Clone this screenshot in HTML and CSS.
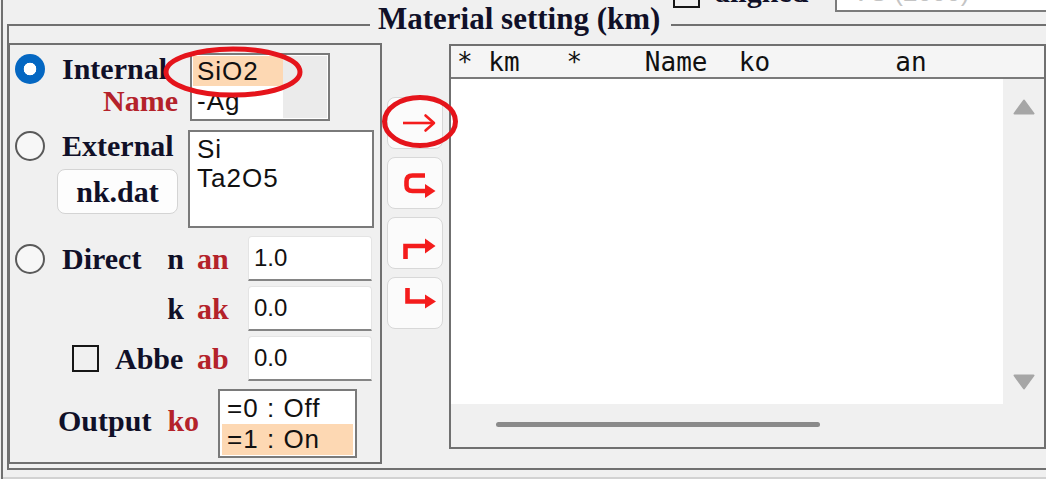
FILE: index.html
```html
<!DOCTYPE html>
<html lang="en">
<head>
<meta charset="utf-8">
<title>Material setting</title>
<link rel="stylesheet" href="styles.css">
</head>
<body>
<div class="window">
  <div class="toprow">
    <span class="chk top-chk"></span>
    <span class="aligned">aligned</span>
    <div class="topbox">VS (2000)</div>
  </div>
  <fieldset class="group">
    <legend>Material setting (km)</legend>
    <div class="grp-body">
      <div class="left">
        <div class="sec-int">
          <div class="lbls lbls-int">
            <div class="line"><span class="radio on"></span><span class="lbl">Internal</span></div>
            <div class="line end"><span class="lbl red">Name</span></div>
          </div>
          <div class="listbox lb-int">
            <div class="items">
              <div class="item sel">SiO2</div>
              <div class="item">-Ag</div>
            </div>
            <div class="gutter"></div>
          </div>
        </div>
        <div class="sec-ext">
          <div class="lbls lbls-ext">
            <div class="line"><span class="radio"></span><span class="lbl">External</span></div>
            <button class="nk">nk.dat</button>
          </div>
          <div class="listbox lb-ext">
            <div class="item">Si</div>
            <div class="item">Ta2O5</div>
          </div>
        </div>
        <div class="sec-direct">
          <div class="frow">
            <div class="fl"><span class="radio"></span><span class="lbl">Direct</span><span class="lbl push">n</span></div>
            <span class="lbl red code">an</span>
            <div class="input">1.0</div>
          </div>
          <div class="frow">
            <div class="fl end"><span class="lbl">k</span></div>
            <span class="lbl red code">ak</span>
            <div class="input">0.0</div>
          </div>
          <div class="frow">
            <div class="fl"><span class="chk abbe-chk"></span><span class="lbl">Abbe</span></div>
            <span class="lbl red code">ab</span>
            <div class="input">0.0</div>
          </div>
        </div>
        <div class="sec-out">
          <span class="lbl">Output</span>
          <span class="lbl red ko">ko</span>
          <div class="listbox lb-out">
            <div class="item">=0 : Off</div>
            <div class="item sel">=1 : On</div>
          </div>
        </div>
      </div>
      <div class="mid">
        <button class="abtn"><svg viewBox="1 1 54 50" width="54" height="50"><path d="M16 26H46" stroke="#f41c1c" stroke-width="2.6" fill="none"/><path d="M38.5 18.5L47 26L38.5 33.5" stroke="#f41c1c" stroke-width="2.6" fill="none" stroke-linecap="round" stroke-linejoin="round"/></svg></button>
        <button class="abtn"><svg viewBox="1 1 54 50" width="54" height="50"><path d="M38 18.5H25.5Q19.5 18.5 19.5 24.5V28.5Q19.5 34 25.5 34H40" stroke="#f41c1c" stroke-width="4.6" fill="none"/><path d="M38 27L48.5 34L38 41Z" fill="#f41c1c"/></svg></button>
        <button class="abtn"><svg viewBox="1 1 54 50" width="54" height="50"><path d="M18.5 42V29H40" stroke="#f41c1c" stroke-width="4.6" fill="none"/><path d="M38 21.5L48.5 29L38 36.5Z" fill="#f41c1c"/></svg></button>
        <button class="abtn"><svg viewBox="1 1 54 50" width="54" height="50"><path d="M20.5 11V24.5H40" stroke="#f41c1c" stroke-width="4.6" fill="none"/><path d="M38 17.5L49 24.5L38 31.5Z" fill="#f41c1c"/></svg></button>
      </div>
      <div class="listview">
        <div class="lv-head">* km   *    Name  ko        an</div>
        <div class="lv-main">
          <div class="lv-rows"></div>
          <div class="vscroll">
            <svg width="22" height="16" viewBox="0 0 22 16"><path d="M11 1.5L20.5 14.5H1.5Z" fill="#a6a6a6" stroke="#a6a6a6" stroke-width="2" stroke-linejoin="round"/></svg>
            <svg width="22" height="16" viewBox="0 0 22 16"><path d="M11 14.5L20.5 1.5H1.5Z" fill="#a6a6a6" stroke="#a6a6a6" stroke-width="2" stroke-linejoin="round"/></svg>
          </div>
        </div>
        <div class="hscroll"><div class="thumb"></div></div>
      </div>
    </div>
  </fieldset>
  <div class="foot-line"></div>
</div>
<svg class="marks" width="1046" height="479" viewBox="0 0 1046 479">
  <ellipse cx="233" cy="72" rx="67" ry="23" fill="none" stroke="#e5141b" stroke-width="5"/>
  <ellipse cx="420" cy="121.5" rx="35.5" ry="24" fill="none" stroke="#e5141b" stroke-width="5"/>
</svg>
</body>
</html>
```

FILE: styles.css
```css
* { box-sizing: border-box; }
html, body { margin: 0; padding: 0; }
body {
  position: relative;
  width: 1046px;
  height: 479px;
  overflow: hidden;
  background: #f0f0f0;
  font-family: "Liberation Serif", "Times New Roman", serif;
  color: #101028;
}
.window {
  height: 479px;
  margin-left: 1px;
  border-left: 2px solid #707070;
}
.toprow {
  height: 12px;
  display: flex;
  align-items: flex-end;
  padding-left: 670px;
}
.chk {
  display: block;
  flex: none;
  width: 27px;
  height: 27px;
  border: 2px solid #161616;
}
.top-chk { margin-bottom: 4px; }
.aligned {
  font-weight: bold;
  font-size: 30px;
  line-height: 24px;
  margin-left: 15px;
  margin-bottom: 8px;
}
.topbox {
  flex: none;
  margin-left: 27px;
  width: 215px;
  height: 40px;
  border: 2px solid #7c7c7c;
  background: #fff;
  color: #c4c4c4;
  font-family: "Liberation Sans", sans-serif;
  font-size: 26px;
  line-height: 36px;
  padding-left: 15px;
}
.group {
  margin: -6px 0 0 4px;
  padding: 0;
  border: 2px solid #707070;
  width: 1100px;
  min-width: 0;
}
.group legend {
  margin-left: 361px;
  padding: 0 11px 12px 8px;
  font-weight: bold;
  font-size: 31px;
  line-height: 25px;
}
.grp-body {
  display: flex;
  align-items: flex-start;
  height: 425px;
}
.left {
  flex: none;
  width: 373px;
  height: 421px;
  border: 2px solid #707070;
  border-left-width: 1px;
  padding-left: 1px;
}
.lbl {
  font-weight: bold;
  font-size: 30px;
  line-height: 32px;
  white-space: nowrap;
}
.red { color: #b4222a; }
.line {
  display: flex;
  align-items: center;
  height: 32px;
}
.line.end { justify-content: flex-end; padding-right: 12px; }
.radio {
  flex: none;
  width: 30px;
  height: 30px;
  border-radius: 50%;
  margin-left: 4px;
  margin-right: 17px;
  border: 2px solid #5a5a5a;
  background: #f7f7f7;
}
.radio.on {
  border: none;
  background: radial-gradient(circle, #fff 0 6px, #0467c2 6.6px);
}
.listbox {
  flex: none;
  background: #fff;
  border: 2px solid #7a7a7a;
  overflow: hidden;
}
.item {
  font-family: "Liberation Sans", sans-serif;
  font-size: 26px;
  letter-spacing: 1px;
  color: #111;
  white-space: pre;
}
.item.sel { background: #fdd8b3; }

.sec-int { display: flex; padding-top: 8px; height: 80px; }
.lbls-int { width: 179px; }
.lb-int { width: 140px; height: 68px; display: flex; padding: 1px; }
.lb-int .items { width: 90px; }
.lb-int .item { height: 30px; line-height: 30px; padding-left: 4px; }
.lb-int .gutter { flex: 1; background: #ebebeb; }

.sec-ext { display: flex; padding-top: 5px; height: 103px; }
.lbls-ext { width: 177px; }
.nk {
  display: block;
  margin: 7px 0 0 46px;
  width: 121px;
  height: 45px;
  border: 1px solid #d4d4d4;
  border-radius: 8px;
  background: #fdfdfd;
  font-family: "Liberation Serif", serif;
  font-weight: bold;
  font-size: 30px;
  line-height: 1;
  color: #101028;
  padding: 0;
}
.lb-ext { width: 186px; height: 98px; padding: 3px 0 0 7px; }
.lb-ext .item { height: 29px; line-height: 29px; }

.sec-direct { margin-top: 8px; display: flex; flex-direction: column; gap: 5px; }
.frow { display: flex; align-items: center; height: 45px; }
.fl { width: 173px; height: 100%; display: flex; align-items: center; flex: none; }
.fl.end { justify-content: flex-end; }
.fl .push { margin-left: auto; }
.code { width: 64px; padding-left: 13px; flex: none; }
.abbe-chk { margin-left: 61px; margin-right: 16px; }
.input {
  flex: none;
  width: 124px;
  height: 45px;
  background: #fff;
  border: 1px solid #e4e4e4;
  border-bottom: 2px solid #858585;
  border-radius: 4px 4px 0 0;
  font-family: "Liberation Sans", sans-serif;
  font-size: 24px;
  line-height: 42px;
  padding-left: 5px;
  color: #111;
}

.sec-out { display: flex; align-items: center; margin-top: 8px; height: 69px; padding-left: 47px; }
.sec-out .lbl { padding-bottom: 6px; }
.ko { margin-left: 16px; }
.lb-out { margin-left: 19px; width: 139px; height: 69px; padding: 2px; }
.lb-out .item { height: 31px; line-height: 31px; padding-left: 5px; }

.mid {
  flex: none;
  margin-left: 5px;
  padding-top: 54px;
  display: flex;
  flex-direction: column;
  gap: 8px;
}
.abtn {
  display: block;
  width: 56px;
  height: 52px;
  padding: 0;
  border: 1px solid #d8d8d8;
  border-radius: 8px;
  background: #fbfbfb;
}
.abtn svg { display: block; }

.listview {
  flex: none;
  margin-left: 6px;
  margin-top: 1px;
  width: 597px;
  height: 405px;
  border: 2px solid #707070;
  display: flex;
  flex-direction: column;
  background: #fff;
}
.lv-head {
  height: 33px;
  border-bottom: 2px solid #7a7a7a;
  background: #f5f5f5;
  font-family: "DejaVu Sans Mono", "Liberation Mono", monospace;
  font-size: 26px;
  line-height: 31px;
  padding: 1px 0 0 6px;
  white-space: pre;
  color: #111;
}
.lv-main { display: flex; height: 325px; }
.lv-rows { flex: 1; background: #fff; }
.vscroll {
  width: 41px;
  background: #f0f0f0;
  display: flex;
  flex-direction: column;
  justify-content: space-between;
  align-items: center;
  padding: 20px 0 14px;
}
.vscroll svg { display: block; }
.hscroll {
  height: 43px;
  background: #f0f0f0;
  padding: 18px 0 0 45px;
}
.thumb {
  width: 324px;
  height: 5px;
  border-radius: 3px;
  background: #8a8a8a;
}
.foot-line {
  margin-top: 7px;
  height: 2px;
  background: #d2d2d2;
}
.marks {
  position: absolute;
  left: 0;
  top: 0;
  pointer-events: none;
}
```
